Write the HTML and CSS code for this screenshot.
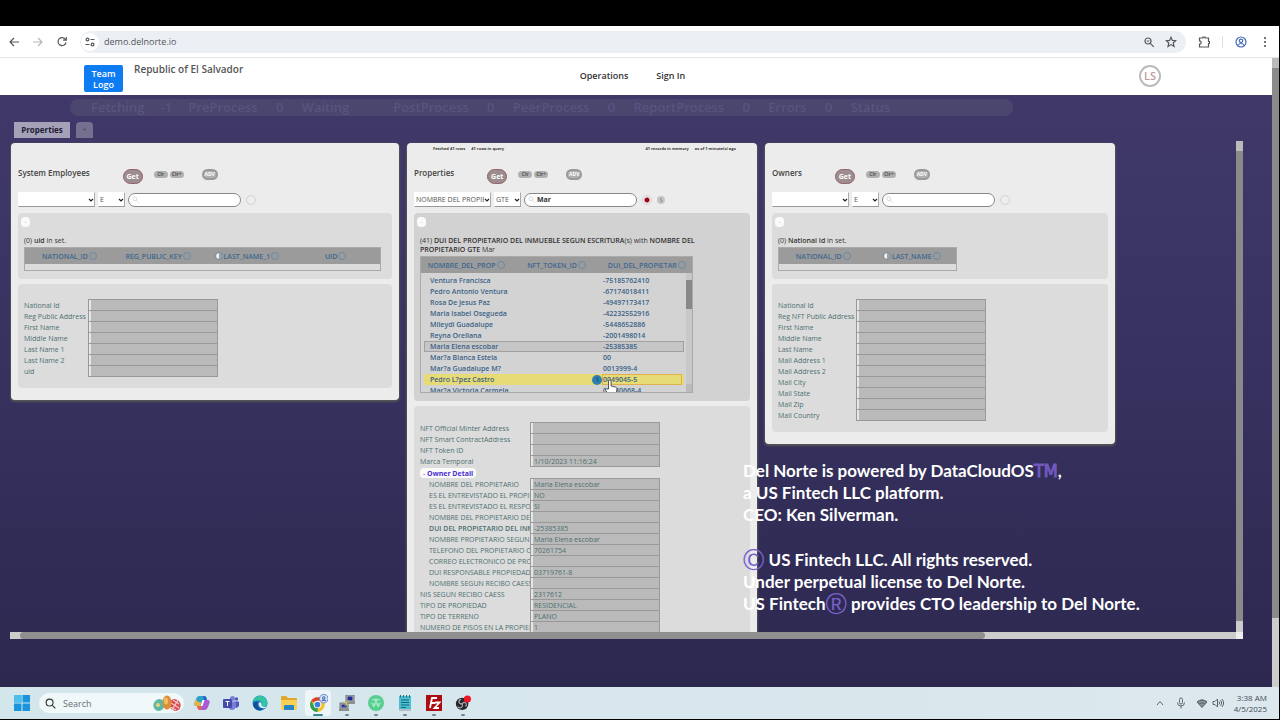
FILE: index.html
```html
<!DOCTYPE html>
<html lang="en">
	<head>
		<meta charset="UTF-8" />
		<meta name="viewport" content="width=device-width, initial-scale=1.0" />
		<title>Republic of El Salvador</title>
		<link rel="stylesheet" href="styles.css">
	</head>
	<body>
		<div class="browser-bar">
			<button type="button" class="icon-btn" aria-label="Back"><svg viewBox="0 0 12 12"><path d="M11 6H2M6 2L2 6l4 4" /></svg></button>
			<button type="button" class="icon-btn faded" aria-label="Forward"><svg viewBox="0 0 12 12"><path d="M1 6h9M6 2l4 4-4 4" /></svg></button>
			<button type="button" class="icon-btn" aria-label="Reload"><svg viewBox="0 0 12 12"><path d="M9.5 3.5A4 4 0 1 0 10 6.5M10.3 1v3.2H7" /></svg></button>
			<div class="address">
				<span class="tune"><svg viewBox="0 0 12 12"><path d="M6.500 3.500h4M1.500 8.500h4" /><circle cx="3.500" cy="3.500" r="1.400" /><circle cx="8.500" cy="8.500" r="1.400" /></svg></span>
				<input type="text" class="url" aria-label="Address" value="demo.delnorte.io" />
				<button type="button" class="icon-btn" aria-label="Zoom"><svg viewBox="0 0 12 12"><circle cx="5" cy="5" r="3" /><path d="M7.3 7.3l3.5 3.5M3.7 5h2.6" /></svg></button>
				<button type="button" class="icon-btn" aria-label="Bookmark"><svg viewBox="0 0 12 12"><path d="M6 1.3l1.4 3.1 3.3.3-2.5 2.3.8 3.4L6 8.6l-3 1.8.8-3.4L1.3 4.7l3.3-.3z" /></svg></button>
			</div>
			<button type="button" class="icon-btn" aria-label="Extensions"><svg viewBox="0 0 12 12"><path d="M1.500 2h3.500V1h2v1h3.500v3.500h1v2h-1V11h-9V8.200a1.700 1.700 0 0 0 0-3.400z" /></svg></button>
			<span class="bar-line"></span>
			<button type="button" class="icon-btn profile" aria-label="Profile"><svg viewBox="0 0 12 12"><circle cx="6" cy="6" r="5" /><circle cx="6" cy="4.800" r="1.700" /><path d="M3.200 9c1-2 4.600-2 5.600 0" /></svg></button>
			<button type="button" class="icon-btn dots" aria-label="Menu"><svg viewBox="0 0 12 12"><circle cx="6" cy="2" r="1" /><circle cx="6" cy="6" r="1" /><circle cx="6" cy="10" r="1" /></svg></button>
		</div>

		<div class="viewport">
			<div class="page">
				<header class="site-header">
					<div class="brand">
						<button type="button" class="logo">Team<br />Logo</button>
						<h1>Republic of El Salvador</h1>
					</div>
					<nav>
						<a href="#operations">Operations</a>
						<a href="#signin">Sign In</a>
					</nav>
					<span class="avatar">LS</span>
				</header>

				<main class="stage">
					<div class="status-bar">
						<span>Fetching</span><span class="count">-1</span>
						<span>PreProcess</span><span class="count">0</span>
						<span>Waiting</span><span class="count"></span>
						<span>PostProcess</span><span class="count">0</span>
						<span>PeerProcess</span><span class="count">0</span>
						<span>ReportProcess</span><span class="count">0</span>
						<span>Errors</span><span class="count">0</span>
						<span>Status</span>
					</div>
					<div class="tabs">
						<button type="button" class="tab">Properties</button>
						<button type="button" class="tab add">+</button>
					</div>

					<div class="workspace">
						<div class="cards">
							<section class="card wide">
								<div class="meta"></div>
								<div class="card-head">
									<h2>System Employees</h2>
									<button type="button" class="get">Get</button>
									<button type="button" class="clr">Clr</button>
									<button type="button" class="clr">Clr+</button>
									<button type="button" class="adv">ADV</button>
								</div>
								<div class="search">
									<select class="col-select" aria-label="Column"><option></option></select>
									<select class="op-select" aria-label="Operator"><option>E</option></select>
									<input type="search" class="term" aria-label="Search employees" />
									<input type="radio" class="ring" aria-label="Live" />
								</div>
								<div class="panel">
									<button type="button" class="collapse">-</button>
									<p class="summary">(0) <b>uid</b> in set.</p>
									<table class="grid">
										<thead>
											<tr>
												<th>NATIONAL_ID<i></i></th>
												<th>REG_PUBLIC_KEY<i></i></th>
												<th><i class="sorted"></i>LAST_NAME_1<i></i></th>
												<th>UID<i></i></th>
											</tr>
										</thead>
										<tbody><tr><td></td></tr></tbody>
									</table>
								</div>
								<div class="panel details">
									<label class="field"><span>National Id</span><input type="text" /></label>
									<label class="field"><span>Reg Public Address</span><input type="text" /></label>
									<label class="field"><span>First Name</span><input type="text" /></label>
									<label class="field"><span>Middle Name</span><input type="text" /></label>
									<label class="field"><span>Last Name 1</span><input type="text" /></label>
									<label class="field"><span>Last Name 2</span><input type="text" /></label>
									<label class="field"><span>uid</span><input type="text" /></label>
								</div>
							</section>

							<section class="card tall">
								<div class="meta">
									<span>Fetched 41 rows</span><span>41 rows in query</span>
									<span class="right">41 records in memory</span><span>as of 1 minute(s) ago</span>
								</div>
								<div class="card-head">
									<h2>Properties</h2>
									<button type="button" class="get">Get</button>
									<button type="button" class="clr">Clr</button>
									<button type="button" class="clr">Clr+</button>
									<button type="button" class="adv">ADV</button>
								</div>
								<div class="search">
									<select class="col-select" aria-label="Column"><option>NOMBRE DEL PROPIETARIO</option></select>
									<select class="op-select" aria-label="Operator"><option>GTE</option></select>
									<input type="search" class="term" aria-label="Search properties" value="Mar" />
									<input type="radio" class="ring" aria-label="Live" checked />
									<button type="button" class="step">S</button>
								</div>
								<div class="panel active">
									<button type="button" class="collapse">-</button>
									<p class="summary">(41) <b>DUI DEL PROPIETARIO DEL INMUEBLE SEGUN ESCRITURA</b>(s) with <b>NOMBRE DEL PROPIETARIO GTE</b> Mar</p>
									<table class="grid results">
										<thead>
											<tr>
												<th>NOMBRE_DEL_PROP<i></i></th>
												<th>NFT_TOKEN_ID<i></i></th>
												<th>DUI_DEL_PROPIETAR<i></i></th>
											</tr>
										</thead>
										<tbody>
											<tr><td>Ventura Francisca</td><td>-75185762410</td></tr>
											<tr><td>Pedro Antonio Ventura</td><td>-67174018411</td></tr>
											<tr><td>Rosa De Jesus Paz</td><td>-49497173417</td></tr>
											<tr><td>Maria Isabel Osegueda</td><td>-42232552916</td></tr>
											<tr><td>Mileydi Guadalupe</td><td>-5448652886</td></tr>
											<tr><td>Reyna Orellana</td><td>-2001498014</td></tr>
											<tr class="selected"><td>Maria Elena escobar</td><td>-25385385</td></tr>
											<tr><td>Mar?a Blanca Estela</td><td>00</td></tr>
											<tr><td>Mar?a Guadalupe M?</td><td>0013999-4</td></tr>
											<tr class="hover">
												<td>Pedro L?pez Castro</td>
												<td>
													0049045-5
													<svg class="clock" viewBox="0 0 10 10"><circle cx="5" cy="5" r="5" fill="#2f7fae" /><path d="M5 2v3l2 1.500" fill="none" stroke="#174f77" /></svg>
													<svg class="pointer" viewBox="0 0 14 18"><path d="M4.500 10V2.300a1.300 1.300 0 0 1 2.600 0V7l4.400 1.100c1 .3 1.500 1 1.400 2l-.6 4.200-1 2.700H6l-4.300-5.500c-.8-1 .5-2.200 1.500-1.400z" fill="#fff" stroke="#333" stroke-width=".8" /></svg>
												</td>
											</tr>
											<tr><td>Mar?a Victoria Carmela</td><td>00130668-4</td></tr>
										</tbody>
									</table>
								</div>
								<div class="panel details">
									<label class="field"><span>NFT Official Minter Address</span><input type="text" /></label>
									<label class="field"><span>NFT Smart ContractAddress</span><input type="text" /></label>
									<label class="field"><span>NFT Token ID</span><input type="text" /></label>
									<label class="field"><span>Marca Temporal</span><input type="text" value="1/10/2023 11:16:24" /></label>
									<button type="button" class="group">- <b>Owner Detail</b></button>
									<label class="field sub"><span>NOMBRE DEL PROPIETARIO</span><input type="text" value="Maria Elena escobar" /></label>
									<label class="field sub"><span>ES EL ENTREVISTADO EL PROPIETARIO</span><input type="text" value="NO" /></label>
									<label class="field sub"><span>ES EL ENTREVISTADO EL RESPONSABLE</span><input type="text" value="SI" /></label>
									<label class="field sub"><span>NOMBRE DEL PROPIETARIO DEL</span><input type="text" /></label>
									<label class="field sub strong"><span>DUI DEL PROPIETARIO DEL INMUEBLE</span><input type="text" value="-25385385" /></label>
									<label class="field sub"><span>NOMBRE PROPIETARIO SEGUN CAESS</span><input type="text" value="Maria Elena escobar" /></label>
									<label class="field sub"><span>TELEFONO DEL PROPIETARIO O RESPONSABLE</span><input type="text" value="70261754" /></label>
									<label class="field sub"><span>CORREO ELECTRONICO DE PROPIETARIO</span><input type="text" /></label>
									<label class="field sub"><span>DUI RESPONSABLE PROPIEDAD (</span><input type="text" value="03719761-8" /></label>
									<label class="field sub"><span>NOMBRE SEGUN RECIBO CAESS</span><input type="text" /></label>
									<label class="field"><span>NIS SEGUN RECIBO CAESS</span><input type="text" value="2317612" /></label>
									<label class="field"><span>TIPO DE PROPIEDAD</span><input type="text" value="RESIDENCIAL" /></label>
									<label class="field"><span>TIPO DE TERRENO</span><input type="text" value="PLANO" /></label>
									<label class="field"><span>NUMERO DE PISOS EN LA PROPIEDAD</span><input type="text" value="1" /></label>
								</div>
							</section>

							<section class="card owners">
								<div class="meta"></div>
								<div class="card-head">
									<h2>Owners</h2>
									<button type="button" class="get">Get</button>
									<button type="button" class="clr">Clr</button>
									<button type="button" class="clr">Clr+</button>
									<button type="button" class="adv">ADV</button>
								</div>
								<div class="search">
									<select class="col-select" aria-label="Column"><option></option></select>
									<select class="op-select" aria-label="Operator"><option>E</option></select>
									<input type="search" class="term" aria-label="Search owners" />
									<input type="radio" class="ring" aria-label="Live" />
								</div>
								<div class="panel">
									<button type="button" class="collapse">-</button>
									<p class="summary">(0) <b>National Id</b> in set.</p>
									<table class="grid">
										<thead>
											<tr>
												<th>NATIONAL_ID<i></i></th>
												<th><i class="sorted"></i>LAST_NAME<i></i></th>
											</tr>
										</thead>
										<tbody><tr><td></td></tr></tbody>
									</table>
								</div>
								<div class="panel details">
									<label class="field"><span>National Id</span><input type="text" /></label>
									<label class="field"><span>Reg NFT Public Address</span><input type="text" /></label>
									<label class="field"><span>First Name</span><input type="text" /></label>
									<label class="field"><span>Middle Name</span><input type="text" /></label>
									<label class="field"><span>Last Name</span><input type="text" /></label>
									<label class="field"><span>Mail Address 1</span><input type="text" /></label>
									<label class="field"><span>Mail Address 2</span><input type="text" /></label>
									<label class="field"><span>Mail City</span><input type="text" /></label>
									<label class="field"><span>Mail State</span><input type="text" /></label>
									<label class="field"><span>Mail Zip</span><input type="text" /></label>
									<label class="field"><span>Mail Country</span><input type="text" /></label>
								</div>
							</section>
						</div>
						<div class="v-scroll"></div>
						<div class="h-scroll"><span></span></div>
						<div class="corner"></div>
					</div>
				</main>
			</div>
			<div class="page-scroll"></div>
			<div class="caption">
				<p>Del Norte is powered by DataCloudOS<span class="tm">TM</span>,<br />a US Fintech LLC platform.<br />CEO: Ken Silverman.</p>
				<p><span class="mark">©</span> US Fintech LLC. All rights reserved.<br />Under perpetual license to Del Norte.<br />US Fintech<span class="mark">®</span> provides CTO leadership to Del Norte.</p>
			</div>
		</div>

		<footer class="taskbar">
			<button type="button" class="start" aria-label="Start"><svg viewBox="0 0 16 16"><path fill="#1c94dc" d="M0 0h7.500v7.500H0zM8.500 0H16v7.500H8.500zM0 8.500h7.500V16H0zM8.500 8.500H16V16H8.500z" /><path fill="#4fc0ee" d="M0 0h7.500v7.500H0z" /></svg></button>
			<label class="task-search">
				<svg viewBox="0 0 12 12"><circle cx="5" cy="5" r="3.800" /><path d="M8 8l3.300 3.300" /></svg>
				<input type="text" placeholder="Search" />
				<svg class="eggs" viewBox="0 0 30 18"><ellipse cx="7" cy="11" rx="5.500" ry="6" fill="#5fb8a6" transform="rotate(25 7 11)" /><circle cx="6" cy="11" r="2" fill="#e8d67c" /><ellipse cx="23" cy="11" rx="5.500" ry="6" fill="#d94d55" transform="rotate(-30 23 11)" /><path d="M19 9l8 5M21 6l6 4M18 13l6 3M26 6l-6 10" stroke="#f6c7c3" /><ellipse cx="15" cy="8.500" rx="4.500" ry="7" fill="#d98f36" /><ellipse cx="14" cy="7" rx="2" ry="3.500" fill="#f0bd68" /></svg>
			</label>
			<div class="apps">
				<button type="button" aria-label="Copilot"><svg viewBox="0 0 16 16"><path d="M5 1h5q2 0 2.500 2l.5 2H9L7 11H2Q0 11 .5 8L2 4q1-3 3-3z" fill="#2aa3c9" /><path d="M2 4L.5 8Q0 11 3 11h3l1-4H4z" fill="#e9b43a" /><path d="M11 15H6q-2 0-2.500-2L3 11h4l2-6h5q2 0 1.500 3L14 12q-1 3-3 3z" fill="#a95bd6" /><path d="M3 11h5l-1 4H6q-2 0-3-4z" fill="#ec6447" /><path d="M6.500 11L8.500 5h2L8.500 11z" fill="#fff" /><path d="M9 1h1q2 0 2.500 2l.5 2h-3z" fill="#2b63cb" /></svg></button>
				<button type="button" aria-label="Teams"><svg viewBox="0 0 16 16"><circle cx="13.500" cy="4" r="1.700" fill="#5058b8" /><circle cx="9.500" cy="3.500" r="2.500" fill="#777fd8" /><path d="M11 6.500h5v4q-1 3-4 2z" fill="#5058b8" /><path d="M5 6.500h8v5q-1 3.500-4 3.500t-4-4z" fill="#777fd8" /><rect y="4" width="9" height="9" rx="1" fill="#454cac" /><path d="M2.500 6.500h4M4.500 6.500V11" stroke="#fff" /></svg></button>
				<button type="button" aria-label="Edge"><svg viewBox="0 0 16 16"><circle cx="8" cy="8" r="7.500" fill="#1676bf" /><path d="M.6 7A7.500 7.500 0 0 1 15.500 8c0 2.500-2 3.500-4 3.500-1.500 0-2.200-.6-1.800-1.300C11 7.500 8 5 5 5.500 3 5.800 1.500 6 .6 7z" fill="#32c4a5" /><path d="M6 8c-1.500 3 1 6.500 5 6.200C7 17 1.500 14.500 1.500 10 1.500 7 4.500 6 6 8z" fill="#13509a" /><path d="M7 7.500c2-1 3 1 2.500 3q2 2 5 .8L13 13c-4 1-7.500-2-6-5.500z" fill="#d9edf3" /></svg></button>
				<button type="button" aria-label="Files"><svg viewBox="0 0 16 16"><path d="M0 2q0-1 1-1h4l2 2h8q1 0 1 1v10H0z" fill="#e2a62b" /><path d="M0 5h16v9q0 1-1 1H1q-1 0-1-1z" fill="#f8d058" /><path d="M3 11q0-1 1-1h8q1 0 1 1v4H3z" fill="#2684c9" /></svg></button>
				<button type="button" class="open current" aria-label="Chrome"><svg viewBox="0 0 18 18"><circle cx="8" cy="10" r="7" fill="#f2c12e" /><path d="M8 10L2 6.500A7 7 0 0 1 14 6.500H8z" fill="#dd4132" /><path d="M8 17A7 7 0 0 1 2 6.500L5.500 12l3 1.500z" fill="#2f9d52" /><circle cx="8" cy="10" r="3.600" fill="#fff" /><circle cx="8" cy="10" r="2.700" fill="#3f7fe0" /><circle cx="14" cy="4.500" r="4" fill="#dce7f7" stroke="#6b8fce" /><circle cx="14" cy="3.800" r="1.200" fill="none" stroke="#3e66b5" /><path d="M12 6.800q2-2 4 0" fill="none" stroke="#3e66b5" /></svg></button>
				<button type="button" class="open" aria-label="Terminal"><svg viewBox="0 0 16 16"><path d="M7 0h8v7H7zM1 8h8v6H1z" fill="#b9bbb9" stroke="#55585c" stroke-width=".8" /><path d="M8.500 1.500H13.500v4H8.500zM2.500 9.500h5v3h-5z" fill="#1f2c99" /><path d="M11 5L5 8l3 .5L4 12l7-4-3-.5z" fill="#f2df2a" /><path d="M0 14h10v2H0zM8 7h8v2H8z" fill="#8d8f92" /></svg></button>
				<button type="button" class="open" aria-label="Cloud"><svg viewBox="0 0 16 16"><circle cx="8" cy="8" r="8" fill="#57cf91" /><path d="M4 5l4-1 4 1M3.500 7.500L6 12l2-8 2 8 2.500-4.500M5 9h6" fill="none" stroke="#b5f0d0" /></svg></button>
				<button type="button" class="open" aria-label="Notepad"><svg viewBox="0 0 16 16"><path d="M2 1h12v15H2z" fill="#49bfd1" /><path d="M2 14h12v2H2z" fill="#b7bcc0" /><path d="M4 5h8M4 7.500h8M4 10h8M4 12.500h5" stroke="#14677f" /><path d="M3.500 0v2.500M6.500 0v2.500M9.500 0v2.500M12.500 0v2.500" stroke="#2b6878" /></svg></button>
				<button type="button" class="open" aria-label="FileZilla"><svg viewBox="0 0 16 16"><rect width="16" height="16" fill="#ae0b12" /><path d="M4 13L6 3h5M5 8h4M9 7.500h4.500L8.500 13H13" fill="none" stroke="#fff" stroke-width="1.800" /></svg></button>
				<button type="button" class="open" aria-label="Recorder"><svg viewBox="0 0 18 18"><circle cx="8" cy="10" r="7" fill="#26272b" /><path d="M8 10C3 10 4 5 7 5M8 10c3-4 6 0 4 3M8 10c2 4-3 6-5 3" fill="none" stroke="#a7a9ad" stroke-width="1.300" /><circle cx="14" cy="4.500" r="4" fill="#f01622" /></svg></button>
			</div>
			<div class="tray">
				<svg viewBox="0 0 12 12"><path d="M3 8l3-3.500L9 8" /></svg>
				<svg class="mic" viewBox="0 0 12 12"><rect x="4.500" y="1" width="3" height="6" rx="1.500" /><path d="M2.500 5.500Q2.500 9 6 9t3.500-3.500M6 9v2.500" /></svg>
				<svg class="wifi" viewBox="0 0 12 12"><path d="M1 5q5-4 10 0L6 10.500z" fill="#8a9298" /><path d="M1 5q5-4 10 0M3 7q3-2.500 6 0M6 10V9" /></svg>
				<svg viewBox="0 0 12 12"><path d="M1 4.500h2L5.500 2v8L3 7.500H1zM7 4.500q1.200 1.500 0 3M8.600 3.200q2.200 2.800 0 5.600M10 2q3.200 4 0 8" /></svg>
				<div class="time">3:38 AM<br />4/5/2025</div>
			</div>
		</footer>
	</body>
</html>
```

FILE: styles.css
```css
* {
	box-sizing: border-box;
}
body {
	margin: 0;
	height: 100vh;
	padding: 26px 1px 1px 0;
	display: flex;
	flex-direction: column;
	background: #000;
	font-family: "Open Sans", "Noto Sans", sans-serif;
	overflow: hidden;
}
button,
input,
select {
	font-family: inherit;
	margin: 0;
	padding: 0;
	border: none;
	outline: none;
}
h1,
h2,
p {
	margin: 0;
}
svg {
	display: block;
	flex: none;
}

/* browser toolbar */
.browser-bar {
	flex: none;
	display: flex;
	align-items: center;
	height: 32px;
	padding: 0 8px;
	gap: 12px;
	background: #fff;
	border-bottom: 1px solid #e3e5e7;
}
.icon-btn {
	width: 12px;
	height: 12px;
	background: none;
}
.icon-btn svg,
.tune svg {
	width: 12px;
	height: 12px;
	fill: none;
	stroke: #55585b;
	stroke-width: 1.2;
}
.faded svg {
	stroke: #b4b7ba;
}
.profile svg {
	stroke: #4369b8;
}
.dots svg {
	fill: #45484b;
	stroke: none;
}
.bar-line {
	width: 1px;
	height: 12px;
	background: #dde1e6;
}
.address {
	flex: 1;
	display: flex;
	align-items: center;
	gap: 5px;
	height: 22px;
	padding: 0 9px 0 1px;
	border-radius: 11px;
	background: #ecf0f5;
}
.address .icon-btn {
	margin-left: 5px;
}
.tune {
	padding: 3px;
	border-radius: 9px;
	background: #fff;
}
.url {
	flex: 1;
	background: none;
	font-size: 9px;
	color: #515559;
}

/* page */
.viewport {
	position: relative;
	flex: 1;
	min-height: 0;
	display: flex;
}
.page {
	flex: 1;
	display: flex;
	flex-direction: column;
	min-width: 0;
}
.page-scroll {
	width: 7px;
	background: linear-gradient(#bbb 10px, #8a8a8a 10px, #8a8a8a 560px, #ccc 560px);
}
.site-header {
	flex: none;
	display: grid;
	grid-template-columns: 1fr auto 1fr;
	height: 37px;
	padding: 0 111px 0 84px;
	background: #fff;
	align-items: center;
}
.brand {
	display: flex;
	gap: 11px;
	padding-top: 4px;
}
.logo {
	width: 39px;
	height: 27px;
	border-radius: 2px;
	background: #0d7cf2;
	color: #fff;
	font-size: 9px;
	font-weight: 600;
	line-height: 11px;
}
.brand h1 {
	font-size: 10px;
	font-weight: 600;
	line-height: 8px;
	color: #555;
}
nav {
	display: flex;
	gap: 28px;
	padding: 0 0 2px 20px;
}
nav a {
	font-size: 9px;
	font-weight: 600;
	color: #333;
	text-decoration: none;
}
.avatar {
	justify-self: end;
	width: 22px;
	height: 22px;
	margin-bottom: 2px;
	border: 2px solid #bbb;
	border-radius: 50%;
	color: #bf9ba0;
	font-size: 11px;
	font-weight: 600;
	line-height: 18px;
	text-align: center;
}
.stage {
	flex: 1;
	min-height: 0;
	display: flex;
	flex-direction: column;
	padding: 4px 29px 48px 10px;
	background: linear-gradient(#3f3868, #3d3768 15%, #2f2b54 85%, #2c284e);
}
.status-bar {
	display: flex;
	align-items: center;
	width: 943px;
	height: 17px;
	margin-left: 60px;
	padding: 0 0 2px 21px;
	border-radius: 8px;
	background: #4a466e;
	color: #575480;
	font-size: 13px;
	font-weight: 600;
}
.count {
	width: 44px;
	text-align: center;
}
.tabs {
	display: flex;
	align-items: flex-end;
	gap: 6px;
	height: 22px;
	padding-left: 4px;
}
.tab {
	width: 56px;
	height: 16px;
	background: #a5a1b8;
	color: #201d33;
	font-size: 8px;
	font-weight: 700;
	line-height: 14px;
}
.tab.add {
	width: 17px;
	border-radius: 4px 4px 0 0;
	background: #75708f;
	color: #55506f;
	font-size: 7px;
}

/* scrolling work area */
.workspace {
	flex: 1;
	min-height: 0;
	margin-top: 3px;
	display: grid;
	grid-template-columns: minmax(0, 1fr) 7px;
	grid-template-rows: minmax(0, 1fr) 7px;
}
.cards {
	display: flex;
	align-items: flex-start;
	gap: 8px;
	overflow: hidden;
	padding: 2px 0 0 1px;
}
.v-scroll {
	background: linear-gradient(#bbb 10px, #8a8a8a 10px, #8a8a8a 480px, #ccc 480px);
}
.h-scroll {
	padding: 0 10px;
	background: #ccc;
}
.h-scroll span {
	display: block;
	width: 80%;
	height: 7px;
	border-radius: 4px;
	background: #8f8f8f;
}
.corner {
	background: #eee;
}

/* cards */
.card {
	flex: none;
	width: 350px;
	padding: 0 7px 12px;
	border-radius: 4px;
	background: #ececec;
	box-shadow: 0 1px 2px 1px #555;
}
.card.wide {
	width: 388px;
}
.meta {
	display: flex;
	gap: 6px;
	height: 12px;
	padding: 0 14px 0 19px;
	color: #333;
	font-size: 4px;
	font-weight: 700;
	line-height: 12px;
}
.meta .right {
	margin-left: auto;
}
.card-head {
	display: flex;
	align-items: flex-start;
	height: 37px;
	padding-top: 12px;
}
.card-head h2 {
	margin-right: 33px;
	color: #444;
	font-size: 8px;
	font-weight: 600;
	line-height: 12px;
}
.get,
.clr,
.adv {
	background: #b0b0b0;
	color: #555;
}
.get {
	width: 20px;
	height: 15px;
	margin: 2px 11px 0 0;
	border: 1px solid #96606a;
	border-radius: 8px;
	background: #9c8e90;
	color: #fff;
	font-size: 7px;
	font-weight: 700;
	line-height: 12px;
}
.clr {
	width: 14px;
	height: 7px;
	margin: 4px 2px 0 0;
	border-radius: 4px;
	font-size: 5px;
	font-weight: 700;
	line-height: 7px;
}
.adv {
	width: 16px;
	height: 11px;
	margin: 2px 0 0 16px;
	border: 2px solid #999;
	border-radius: 6px;
	color: #fff;
	font-size: 5px;
	font-weight: 700;
	line-height: 7px;
}
.search {
	display: flex;
	align-items: center;
	gap: 3px;
	margin-bottom: 6px;
}
.search select {
	appearance: none;
	height: 15px;
	padding: 0 6px 0 1px;
	border: 1px solid #fff;
	border-right-color: #aaa;
	border-bottom-color: #999;
	background: #fff url("data:image/svg+xml,%3Csvg xmlns='http://www.w3.org/2000/svg' viewBox='0 0 6 6'%3E%3Cpath d='M1 2l2 2 2-2' fill='none' stroke='%23222' stroke-width='1.2'/%3E%3C/svg%3E") no-repeat right / 6px;
	color: #555;
	font-size: 7px;
}
.col-select {
	width: 77px;
}
.op-select {
	width: 27px;
}
.term {
	appearance: none;
	width: 113px;
	height: 14px;
	padding-left: 12px;
	border: 1px solid #888;
	border-radius: 7px;
	background: #fff url("data:image/svg+xml,%3Csvg xmlns='http://www.w3.org/2000/svg' viewBox='0 0 8 8'%3E%3Cpath d='M5 5l2.500 2.500M1 3.200a2.200 2.200 0 1 0 4.400 0a2.200 2.200 0 1 0-4.400 0' fill='none' stroke='%23ccc' stroke-width='.8'/%3E%3C/svg%3E") no-repeat 3px center / 7px;
	color: #333;
	font-size: 7px;
	font-weight: 700;
}
.ring {
	appearance: none;
	width: 10px;
	height: 10px;
	margin-left: 2px;
	border: 1px solid #d2d2d2;
	border-radius: 50%;
	background: #eee;
}
.ring:checked {
	background: radial-gradient(#9c0714 2px, #eee 3px);
}
.step {
	width: 8px;
	height: 8px;
	margin-left: 2px;
	border-radius: 50%;
	background: #c4c4c4;
	color: #777;
	font-size: 5px;
	line-height: 8px;
}

/* result panels */
.panel {
	padding: 4px 6px 8px;
	margin-bottom: 5px;
	border-radius: 4px;
	background: #dcdcdc;
}
.panel.active {
	background: #d2d2d2;
}
.collapse {
	display: block;
	width: 9px;
	height: 10px;
	margin-left: -3px;
	border-radius: 4px;
	background: #fafafa;
	color: #aaa;
	font-size: 6px;
	line-height: 8px;
}
.summary {
	margin: 9px 0 2px;
	max-width: 282px;
	color: #333;
	font-size: 7px;
	line-height: 9px;
}
.summary b {
	font-weight: 600;
}
.grid {
	display: block;
	width: 179px;
	border: 1px solid #aaa;
}
.wide .grid {
	width: 357px;
}
.grid thead,
.grid tbody {
	display: block;
}
.grid thead tr {
	display: flex;
	height: 16px;
	background: #9b9b9b;
}
.grid th {
	flex: 1;
	display: flex;
	align-items: center;
	justify-content: center;
	gap: 1px;
	padding: 0;
	color: #40688f;
	font-size: 7px;
	font-weight: 600;
}
.grid th i {
	width: 8px;
	height: 8px;
	border: 1px solid #6b8aa5;
	border-radius: 50%;
}
.grid th .sorted {
	border-color: #888;
	background: linear-gradient(90deg, #eee 50%, #8fa6b8 50%);
}
.grid tbody tr {
	display: flex;
	height: 6px;
}
.grid.results {
	width: 273px;
}
.results tbody {
	height: 119px;
	padding: 2px 8px 0 3px;
	overflow: hidden;
	background:
		linear-gradient(#888, #888) no-repeat right 7px / 6px 29px,
		linear-gradient(#bbb, #bbb) no-repeat right bottom / 6px 8px,
		linear-gradient(#c8c8c8, #c8c8c8) no-repeat right / 6px 100%,
		#d3d3d3;
}
.results tbody tr {
	height: 11px;
	align-items: center;
	padding-left: 6px;
}
.results td {
	position: relative;
	width: 173px;
	padding: 0;
	color: #3a6288;
	font-size: 7px;
	font-weight: 600;
	line-height: 9px;
}
.results td + td {
	width: 78px;
}
.results tbody .selected {
	border: 1px solid #a0a0a0;
	padding-left: 5px;
	background: #c6c6c6;
}
.results tbody .hover {
	background: #e6db74;
}
.hover td + td {
	outline: 1px solid #e0b04f;
}
.clock {
	position: absolute;
	left: -11px;
	top: 0;
	width: 10px;
	height: 10px;
}
.pointer {
	position: absolute;
	left: 1px;
	top: 4px;
	z-index: 1;
	width: 14px;
	height: 18px;
}
/* lets the pointer show over the row below */
.results .hover {
	position: relative;
	z-index: 1;
}

/* detail forms */
.details {
	padding: 15px 6px 12px;
	margin-bottom: 0;
}
.tall .details {
	padding-top: 16px;
}
.field {
	display: flex;
	height: 11px;
	line-height: 13px;
	font-size: 7px;
	color: #4d7070;
}
.field span {
	width: 64px;
	overflow: hidden;
	white-space: nowrap;
}
.owners .field span {
	width: 78px;
}
.tall .field span {
	width: 110px;
}
.tall .sub span {
	width: 101px;
}
.field.sub {
	padding-left: 9px;
}
.strong span {
	font-weight: 600;
}
.field input {
	width: 130px;
	height: 12px;
	border: 1px solid #999;
	box-shadow: inset 2px 0 #e6e6e6;
	padding-left: 3px;
	background: #bababa;
	color: #4d7070;
	font-size: 7px;
}
.group {
	display: block;
	height: 10px;
	margin: 2px 0 0;
	padding: 0 3px;
	border-radius: 4px;
	background: #fafafa;
	color: #4a2fd0;
	font-size: 7px;
	line-height: 9px;
}

/* caption over the page */
.caption {
	position: absolute;
	left: 743px;
	top: 402px;
	color: #fff;
	font-family: Lato, "Open Sans", sans-serif;
	font-size: 17px;
	font-weight: 700;
	line-height: 22px;
}
.caption p + p {
	margin-top: 23px;
}
.tm,
.mark {
	color: #7a60cc;
	font-family: "Liberation Sans", sans-serif;
	font-weight: 400;
	line-height: 0;
}
.mark {
	font-size: 29px;
	vertical-align: -4px;
}
.tm {
	-webkit-text-stroke: 1px #6f57bd;
	font-family: "DejaVu Sans Condensed", "DejaVu Sans", sans-serif;
	font-size: 18px;
}

/* taskbar */
.taskbar {
	flex: none;
	display: flex;
	align-items: center;
	height: 32px;
	padding: 0 12px 0 14px;
	background: linear-gradient(90deg, #d3e6ec, #dce8ee);
}
.start,
.apps button {
	background: none;
}
.start svg {
	width: 16px;
	height: 16px;
}
.task-search {
	display: flex;
	align-items: center;
	gap: 7px;
	width: 145px;
	height: 20px;
	margin: 0 5px 0 9px;
	padding: 0 2px 0 6px;
	border-radius: 10px;
	background: #f0f8fa;
}
.task-search svg {
	width: 11px;
	height: 11px;
	fill: none;
	stroke: #333;
	stroke-width: 1.2;
}
.task-search .eggs {
	width: 30px;
	height: 18px;
	stroke: none;
}
.task-search input {
	flex: 1;
	min-width: 0;
	background: none;
	font-size: 9px;
}
.task-search input::placeholder {
	color: #6a6e72;
}
.apps {
	display: flex;
	gap: 3px;
}
.apps button {
	display: flex;
	flex-direction: column;
	align-items: center;
	justify-content: center;
	position: relative;
	width: 26px;
	height: 26px;
	border-radius: 3px;
}
.apps svg {
	width: 16px;
	height: 16px;
}
.apps .current svg {
	width: 19px;
	height: 19px;
}
.apps .current {
	background: #eef5f8;
}
.open::after {
	content: "";
	position: absolute;
	bottom: 0;
	width: 4px;
	height: 2px;
	border-radius: 1px;
	background: #7b868c;
}
.current::after {
	width: 10px;
	background: #3a8794;
}
.tray {
	display: flex;
	align-items: center;
	gap: 4px;
	margin-left: auto;
}
.tray svg {
	width: 12px;
	height: 12px;
	fill: none;
	stroke: #5c656b;
}
.tray .mic {
	margin: 0 5px;
}
.time {
	margin-left: 6px;
	color: #444a4e;
	font-size: 8px;
	line-height: 11px;
	text-align: right;
}
```
